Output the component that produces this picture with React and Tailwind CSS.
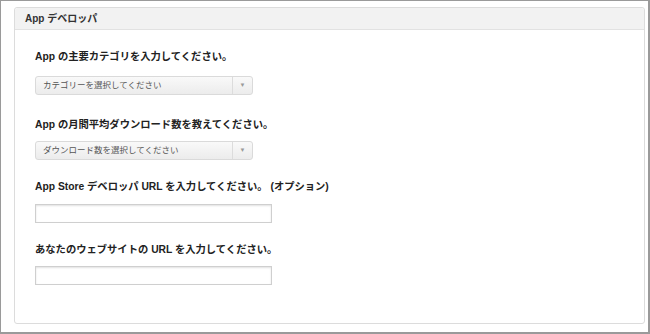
export default function App() {
  const font = { fontFamily: '"Liberation Sans", "Noto Sans CJK JP", sans-serif' };

  return (
    <div
      className="w-[650px] h-[334px] bg-white border-l border-t border-r-2 border-b-2 border-[#9a9a9a] overflow-hidden"
      style={font}
    >
      <div className="ml-[13px] mt-[6px] w-[631px] h-[317px] border border-[#dcdcdc] rounded-[3px] bg-white">
        <div className="h-[22px] bg-[#f2f2f2] border-b border-[#e2e2e2] flex items-center pl-[10px] rounded-t-[3px]">
          <span className="text-[10px] font-bold text-[#333]">App デベロッパ</span>
        </div>

        <div className="pl-[20px] pt-[20px]">
          <p className="text-[10.3px] font-bold text-[#222] leading-[14px]">
            App の主要カテゴリを入力してください。
          </p>
          <div className="mt-[12px] w-[218px] h-[19px] border border-[#dadada] rounded-[3px] bg-gradient-to-b from-[#f9f9f9] to-[#ececec] flex items-center">
            <span className="flex-1 pl-[7px] text-[8.5px] text-[#555]">カテゴリーを選択してください</span>
            <span className="w-[20px] h-full border-l border-[#dcdcdc] flex items-center justify-center">
              <span className="text-[6px] text-[#999]">▼</span>
            </span>
          </div>

          <p className="mt-[23px] text-[10.3px] font-bold text-[#222] leading-[14px]">
            App の月間平均ダウンロード数を教えてください。
          </p>
          <div className="mt-[9px] w-[218px] h-[19px] border border-[#dadada] rounded-[3px] bg-gradient-to-b from-[#f9f9f9] to-[#ececec] flex items-center">
            <span className="flex-1 pl-[7px] text-[8.5px] text-[#555]">ダウンロード数を選択してください</span>
            <span className="w-[20px] h-full border-l border-[#dcdcdc] flex items-center justify-center">
              <span className="text-[6px] text-[#999]">▼</span>
            </span>
          </div>

          <p className="mt-[20px] text-[10.3px] font-bold text-[#222] leading-[14px]">
            App Store デベロッパ URL を入力してください。 (オプション)
          </p>
          <input
            className="block mt-[10px] w-[237px] h-[19px] border border-[#cfcfcf] bg-white shadow-[inset_0_1px_2px_rgba(0,0,0,0.12)] outline-none"
            type="text"
          />

          <p className="mt-[20px] text-[10.3px] font-bold text-[#222] leading-[14px]">
            あなたのウェブサイトの URL を入力してください。
          </p>
          <input
            className="block mt-[9px] w-[237px] h-[19px] border border-[#cfcfcf] bg-white shadow-[inset_0_1px_2px_rgba(0,0,0,0.12)] outline-none"
            type="text"
          />
        </div>
      </div>
    </div>
  );
}
